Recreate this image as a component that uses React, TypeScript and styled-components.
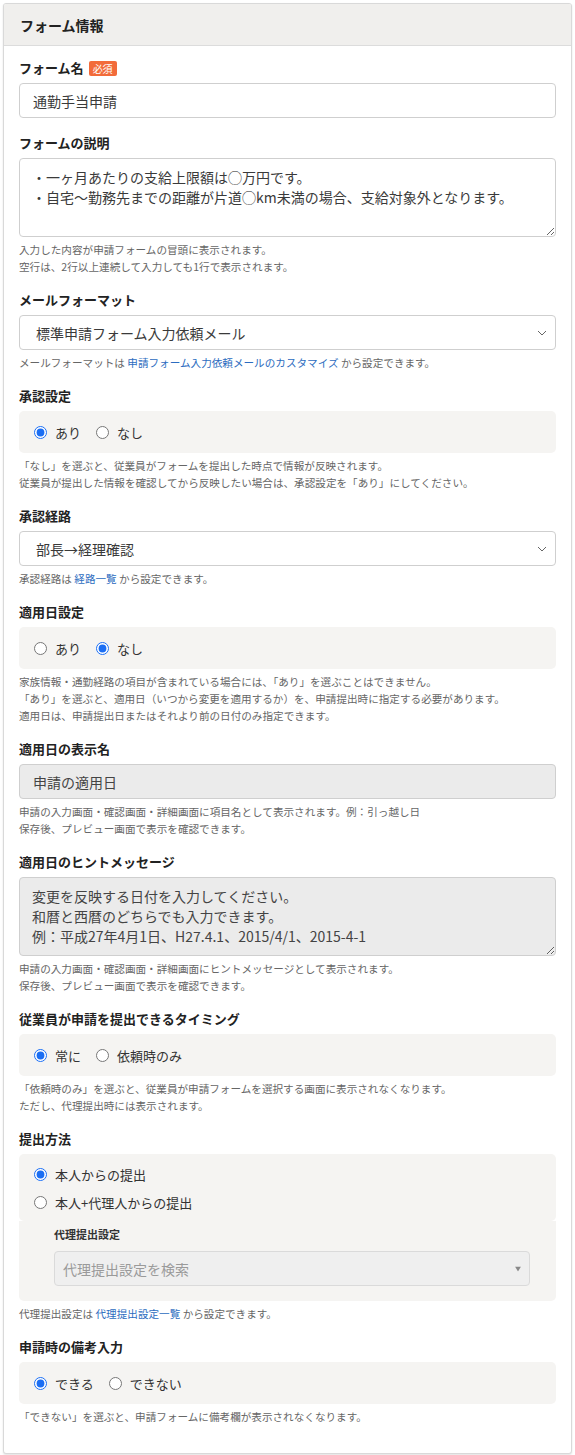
import React from 'react';
import styled, { createGlobalStyle } from 'styled-components';

const GlobalStyle = createGlobalStyle`
  html, body {
    margin: 0;
    padding: 0;
    background: #ffffff;
  }
  body {
    font-family: "Noto Sans CJK JP", "Noto Sans", "Liberation Sans", sans-serif;
    color: #222;
  }
  * {
    box-sizing: border-box;
  }
`;

const Page = styled.div`
  padding: 3px;
`;

const Card = styled.section`
  background: #fff;
  border: 1px solid #d9d9d9;
  border-radius: 3px;
  box-shadow: 0 1px 2px rgba(0, 0, 0, 0.12);
  overflow: hidden;
`;

const CardHeader = styled.header`
  display: flex;
  align-items: center;
  height: 42px;
  padding: 0 16px;
  background: #f0efed;
  border-bottom: 1px solid #dcdcdc;
  font-size: 14px;
  font-weight: 700;
  color: #222;
`;

const CardBody = styled.div`
  padding: 13px 15px 28px;
`;

const Field = styled.div`
  margin-bottom: 16px;

  &:last-child {
    margin-bottom: 0;
  }
`;

const FieldLabel = styled.div`
  display: flex;
  align-items: center;
  gap: 5px;
  height: 18px;
  margin-bottom: 6px;
  font-size: 13px;
  line-height: 18px;
  font-weight: 700;
  color: #222;
`;

const RequiredBadge = styled.span`
  display: inline-block;
  height: 15px;
  padding: 0 4px;
  border-radius: 2px;
  background: #f26b3a;
  color: #fff;
  font-size: 10px;
  line-height: 15px;
  font-weight: 400;
`;

const TextInput = styled.input`
  display: block;
  width: 100%;
  height: 35px;
  padding: 0 13px;
  border: 1px solid #cfcfcf;
  border-radius: 4px;
  background: #fff;
  font-family: inherit;
  font-size: 14px;
  color: #3a3a3a;
  outline: none;

  &:read-only {
    background: #ebebeb;
    color: #444;
  }
`;

const TextArea = styled.textarea`
  display: block;
  width: 100%;
  height: 79px;
  padding: 8px 12px;
  border: 1px solid #cfcfcf;
  border-radius: 4px;
  background: #fff;
  font-family: inherit;
  font-size: 14px;
  line-height: 20px;
  color: #3a3a3a;
  resize: vertical;
  outline: none;

  &:read-only {
    background: #ebebeb;
    color: #444;
  }
`;

const SelectWrap = styled.div`
  position: relative;
`;

const Select = styled.select`
  display: block;
  width: 100%;
  height: 35px;
  padding: 0 36px 0 16px;
  border: 1px solid #cfcfcf;
  border-radius: 4px;
  background: #fff;
  font-family: inherit;
  font-size: 14px;
  color: #3a3a3a;
  appearance: none;
  outline: none;

  &:disabled {
    padding-left: 8px;
    background: #efefef;
    border-color: #dadada;
    color: #9a9a9a;
    opacity: 1;
  }
`;

const SelectIcon = styled.span`
  position: absolute;
  top: 50%;
  right: 9px;
  display: flex;
  transform: translateY(-50%);
  pointer-events: none;
`;

const HelpText = styled.div`
  margin-top: 4px;
  font-size: 10.6px;
  line-height: 17px;
  color: #666;
`;

const HelpLink = styled.a`
  color: #2c6cc0;
  text-decoration: none;
`;

const RadioPanel = styled.div<{ $stacked?: boolean }>`
  display: flex;
  flex-direction: ${(p) => (p.$stacked ? 'column' : 'row')};
  align-items: ${(p) => (p.$stacked ? 'flex-start' : 'center')};
  min-height: 42px;
  padding: ${(p) => (p.$stacked ? '6px 15px 5px' : '0 15px')};
  border-radius: 5px;
  background: #f5f4f2;
`;

const RadioOption = styled.label<{ $stacked?: boolean }>`
  display: inline-flex;
  align-items: center;
  gap: 8px;
  height: 28px;
  margin-right: ${(p) => (p.$stacked ? 0 : 15)}px;
  font-size: 13px;
  color: #333;
  cursor: pointer;
`;

const RadioInput = styled.input`
  width: 13px;
  height: 13px;
  margin: 0;
  accent-color: #1b6ef3;
`;

const SubPanel = styled.div`
  padding: 4px 26px 15px 35px;
  border-radius: 0 0 5px 5px;
  background: #f5f4f2;
`;

const SubLabel = styled.div`
  margin-bottom: 8px;
  font-size: 11px;
  line-height: 18px;
  font-weight: 700;
  color: #333;
`;

const Chevron = () => (
  <svg width="10" height="6" viewBox="0 0 10 6" fill="none">
    <path d="M1 1l4 4 4-4" stroke="#666" strokeWidth="1" />
  </svg>
);

const Caret = () => (
  <svg width="6" height="5" viewBox="0 0 6 5">
    <path d="M0 0h6L3 5z" fill="#888" />
  </svg>
);

interface RadioGroupProps {
  name: string;
  options: string[];
  checked: string;
  stacked?: boolean;
}

const RadioGroup: React.FC<RadioGroupProps> = ({ name, options, checked, stacked }) => (
  <RadioPanel $stacked={stacked}>
    {options.map((opt) => (
      <RadioOption key={opt} $stacked={stacked}>
        <RadioInput type="radio" name={name} defaultChecked={opt === checked} />
        {opt}
      </RadioOption>
    ))}
  </RadioPanel>
);

const SelectField: React.FC<{ value: string; disabled?: boolean }> = ({ value, disabled }) => (
  <SelectWrap>
    <Select defaultValue={value} disabled={disabled}>
      <option value={value}>{value}</option>
    </Select>
    <SelectIcon>{disabled ? <Caret /> : <Chevron />}</SelectIcon>
  </SelectWrap>
);

export default function App() {
  return (
    <Page>
      <GlobalStyle />
      <Card>
        <CardHeader>フォーム情報</CardHeader>
        <CardBody>
          <Field>
            <FieldLabel>
              フォーム名<RequiredBadge>必須</RequiredBadge>
            </FieldLabel>
            <TextInput defaultValue="通勤手当申請" />
          </Field>

          <Field>
            <FieldLabel>フォームの説明</FieldLabel>
            <TextArea
              defaultValue={
                '・一ヶ月あたりの支給上限額は◯万円です。\n・自宅〜勤務先までの距離が片道◯km未満の場合、支給対象外となります。'
              }
            />
            <HelpText>
              入力した内容が申請フォームの冒頭に表示されます。
              <br />
              空行は、2行以上連続して入力しても1行で表示されます。
            </HelpText>
          </Field>

          <Field>
            <FieldLabel>メールフォーマット</FieldLabel>
            <SelectField value="標準申請フォーム入力依頼メール" />
            <HelpText>
              メールフォーマットは <HelpLink href="#">申請フォーム入力依頼メールのカスタマイズ</HelpLink> から設定できます。
            </HelpText>
          </Field>

          <Field>
            <FieldLabel>承認設定</FieldLabel>
            <RadioGroup name="approval" options={['あり', 'なし']} checked="あり" />
            <HelpText>
              「なし」を選ぶと、従業員がフォームを提出した時点で情報が反映されます。
              <br />
              従業員が提出した情報を確認してから反映したい場合は、承認設定を「あり」にしてください。
            </HelpText>
          </Field>

          <Field>
            <FieldLabel>承認経路</FieldLabel>
            <SelectField value="部長→経理確認" />
            <HelpText>
              承認経路は <HelpLink href="#">経路一覧</HelpLink> から設定できます。
            </HelpText>
          </Field>

          <Field>
            <FieldLabel>適用日設定</FieldLabel>
            <RadioGroup name="effective" options={['あり', 'なし']} checked="なし" />
            <HelpText>
              家族情報・通勤経路の項目が含まれている場合には、「あり」を選ぶことはできません。
              <br />
              「あり」を選ぶと、適用日（いつから変更を適用するか）を、申請提出時に指定する必要があります。
              <br />
              適用日は、申請提出日またはそれより前の日付のみ指定できます。
            </HelpText>
          </Field>

          <Field>
            <FieldLabel>適用日の表示名</FieldLabel>
            <TextInput readOnly defaultValue="申請の適用日" />
            <HelpText>
              申請の入力画面・確認画面・詳細画面に項目名として表示されます。例：引っ越し日
              <br />
              保存後、プレビュー画面で表示を確認できます。
            </HelpText>
          </Field>

          <Field>
            <FieldLabel>適用日のヒントメッセージ</FieldLabel>
            <TextArea
              readOnly
              defaultValue={
                '変更を反映する日付を入力してください。\n和暦と西暦のどちらでも入力できます。\n例：平成27年4月1日、H27.4.1、2015/4/1、2015-4-1'
              }
            />
            <HelpText>
              申請の入力画面・確認画面・詳細画面にヒントメッセージとして表示されます。
              <br />
              保存後、プレビュー画面で表示を確認できます。
            </HelpText>
          </Field>

          <Field>
            <FieldLabel>従業員が申請を提出できるタイミング</FieldLabel>
            <RadioGroup name="timing" options={['常に', '依頼時のみ']} checked="常に" />
            <HelpText>
              「依頼時のみ」を選ぶと、従業員が申請フォームを選択する画面に表示されなくなります。
              <br />
              ただし、代理提出時には表示されます。
            </HelpText>
          </Field>

          <Field>
            <FieldLabel>提出方法</FieldLabel>
            <RadioGroup
              name="method"
              options={['本人からの提出', '本人+代理人からの提出']}
              checked="本人からの提出"
              stacked
            />
            <SubPanel>
              <SubLabel>代理提出設定</SubLabel>
              <SelectField value="代理提出設定を検索" disabled />
            </SubPanel>
            <HelpText>
              代理提出設定は <HelpLink href="#">代理提出設定一覧</HelpLink> から設定できます。
            </HelpText>
          </Field>

          <Field>
            <FieldLabel>申請時の備考入力</FieldLabel>
            <RadioGroup name="remarks" options={['できる', 'できない']} checked="できる" />
            <HelpText>「できない」を選ぶと、申請フォームに備考欄が表示されなくなります。</HelpText>
          </Field>
        </CardBody>
      </Card>
    </Page>
  );
}
